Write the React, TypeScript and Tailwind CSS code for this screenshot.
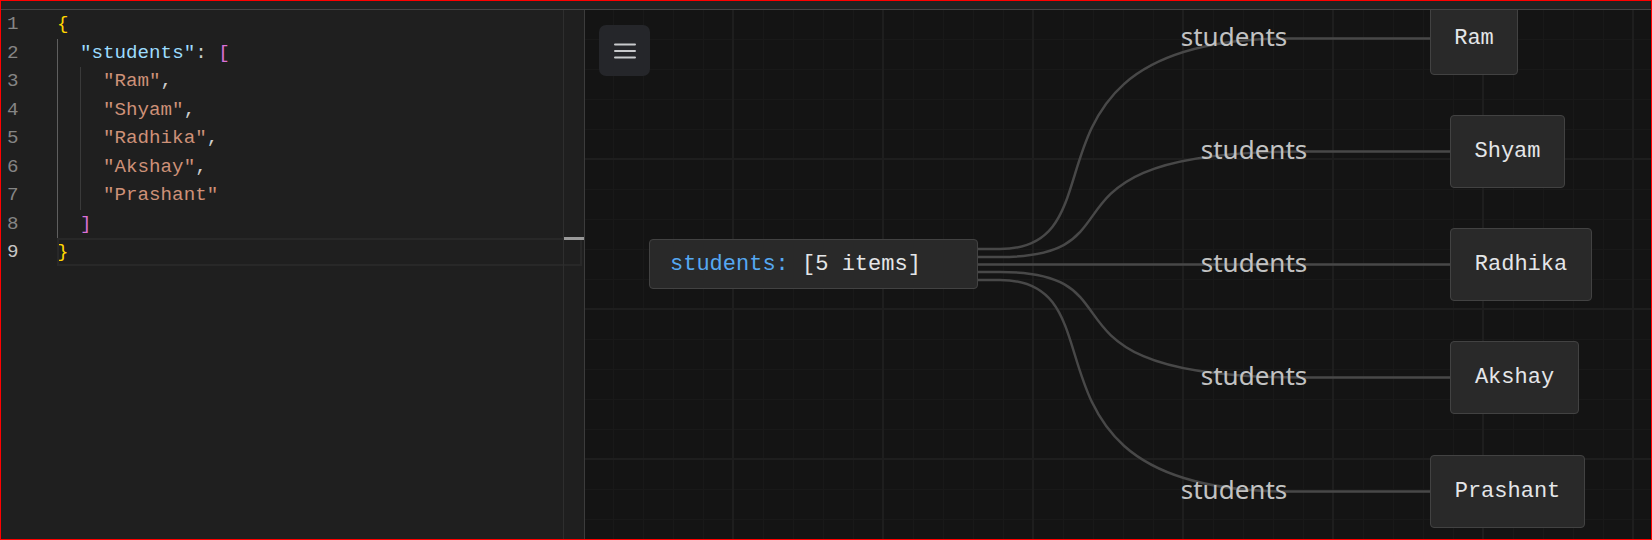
import React from "react";

type Tok = { t: string; c: string };

const STR = "text-[#ce9178]";
const PUNC = "text-[#cccccc]";

const codeLines: { indent: number; toks: Tok[] }[] = [
  { indent: 0, toks: [{ t: "{", c: "text-[#ffd700]" }] },
  {
    indent: 1,
    toks: [
      { t: '"students"', c: "text-[#9cdcfe]" },
      { t: ": ", c: PUNC },
      { t: "[", c: "text-[#da70d6]" },
    ],
  },
  { indent: 2, toks: [{ t: '"Ram"', c: STR }, { t: ",", c: PUNC }] },
  { indent: 2, toks: [{ t: '"Shyam"', c: STR }, { t: ",", c: PUNC }] },
  { indent: 2, toks: [{ t: '"Radhika"', c: STR }, { t: ",", c: PUNC }] },
  { indent: 2, toks: [{ t: '"Akshay"', c: STR }, { t: ",", c: PUNC }] },
  { indent: 2, toks: [{ t: '"Prashant"', c: STR }] },
  { indent: 1, toks: [{ t: "]", c: "text-[#da70d6]" }] },
  { indent: 0, toks: [{ t: "}", c: "text-[#ffd700]" }] },
];

function Editor() {
  return (
    <div className="relative w-[584px] shrink-0 border-r border-[#3c3c3c] bg-[#1f1f1f] font-['Liberation_Mono',monospace] text-[19.2px]">
      {codeLines.map((ln, i) => {
        const active = i === codeLines.length - 1;
        return (
          <div key={i} className="relative flex h-[28.5px] items-stretch leading-[28.5px]">
            <div className={active ? "w-[56px] shrink-0 pl-[6px] text-[#c6c6c6]" : "w-[56px] shrink-0 pl-[6px] text-[#858585]"}>
              {i + 1}
            </div>
            {Array.from({ length: ln.indent }).map((_, k) => (
              <span
                key={k}
                className={k === 0 ? "w-[2ch] shrink-0 border-l border-[#5f5f5f]" : "w-[2ch] shrink-0 border-l border-[#3a3a3a]"}
              />
            ))}
            <span className="whitespace-pre">
              {ln.toks.map((tk, j) => (
                <span key={j} className={tk.c}>
                  {tk.t}
                </span>
              ))}
            </span>
            {active && (
              <div className="pointer-events-none absolute left-[56px] top-0 h-[28px] w-[525px] border-2 border-[#282828]" />
            )}
          </div>
        );
      })}
      <div className="absolute bottom-0 right-0 top-0 w-[21px] border-l border-[#2e2e2e]">
        <div className="absolute left-0 right-0 top-[227px] h-[3px] bg-[#9a9a9a]" />
      </div>
    </div>
  );
}

const children = [
  { name: "Ram", left: 845, top: -8, w: 88, type: "a", labelX: 649 },
  { name: "Shyam", left: 865, top: 105, w: 115, type: "b", labelX: 669 },
  { name: "Radhika", left: 865, top: 218, w: 142, type: "c", labelX: 669 },
  { name: "Akshay", left: 865, top: 331, w: 129, type: "b", labelX: 669 },
  { name: "Prashant", left: 845, top: 445, w: 155, type: "a", labelX: 649 },
];

const sourceYs = [239, 247, 254.5, 262, 270];

function edgePath(i: number) {
  const c = children[i];
  const sy = sourceYs[i];
  const ty = c.top + 36.5;
  const tx = c.left;
  if (c.type === "c") return `M 393 ${sy} L ${tx} ${ty}`;
  if (c.type === "a")
    return `M 393 ${sy} L 415 ${sy} C 545 ${sy}, 415 ${ty}, 705 ${ty} L ${tx} ${ty}`;
  return `M 393 ${sy} L 415 ${sy} C 565 ${sy}, 435 ${ty}, 715 ${ty} L ${tx} ${ty}`;
}

function Canvas() {
  return (
    <div className="relative flex-1 overflow-hidden bg-[#141414] [background-image:linear-gradient(to_right,#1e1e1e_2px,transparent_2px),linear-gradient(to_bottom,#1e1e1e_2px,transparent_2px),linear-gradient(to_right,#191919_1px,transparent_1px),linear-gradient(to_bottom,#191919_1px,transparent_1px)] [background-size:150px_150px,150px_150px,30px_30px,30px_30px] [background-position:147px_148px,147px_148px,28px_29px,28px_29px]">
      <svg className="absolute left-0 top-0" width="1066" height="529" viewBox="0 0 1066 529" fill="none">
        {children.map((_, i) => (
          <path key={i} d={edgePath(i)} stroke="#484848" strokeWidth="2.5" fill="none" />
        ))}
      </svg>

      {children.map((c, i) => (
        <div
          key={`l${i}`}
          className="absolute -translate-x-1/2 -translate-y-1/2 whitespace-nowrap font-['Noto_Sans',sans-serif] text-[26px] leading-none text-[#c2c2c2]"
          style={{ left: c.labelX, top: c.top + 33.5 }}
        >
          students
        </div>
      ))}

      <div className="absolute left-[64px] top-[229px] flex h-[50px] w-[329px] items-center rounded-[4px] border border-[#424242] bg-[#292929] pl-[20px] font-['Liberation_Mono',monospace] text-[22px] whitespace-pre">
        <span className="text-[#56a8f2]">students: </span>
        <span className="text-[#e4e6e8]">[5 items]</span>
      </div>

      {children.map((c) => (
        <div
          key={c.name}
          className="absolute flex h-[73px] items-center justify-center rounded-[4px] border border-[#424242] bg-[#292929] font-['Liberation_Mono',monospace] text-[22px] text-[#e4e6e8]"
          style={{ left: c.left, top: c.top, width: c.w }}
        >
          {c.name}
        </div>
      ))}

      <button className="absolute left-[14px] top-[15px] flex h-[51px] w-[51px] items-center justify-center rounded-[7px] bg-[#25262a]">
        <svg width="22" height="16" viewBox="0 0 22 16" fill="none">
          <path d="M1 1.5 H21 M1 8 H21 M1 14.5 H21" stroke="#c8c9cc" strokeWidth="2" strokeLinecap="round" />
        </svg>
      </button>
    </div>
  );
}

export default function App() {
  return (
    <div className="flex h-[540px] w-[1652px] flex-col overflow-hidden border border-[#ff0000] bg-[#1f1f1f]">
      <div className="h-[9px] shrink-0 border-b border-[#454545] bg-[#222222]" />
      <div className="flex min-h-0 flex-1">
        <Editor />
        <Canvas />
      </div>
    </div>
  );
}
